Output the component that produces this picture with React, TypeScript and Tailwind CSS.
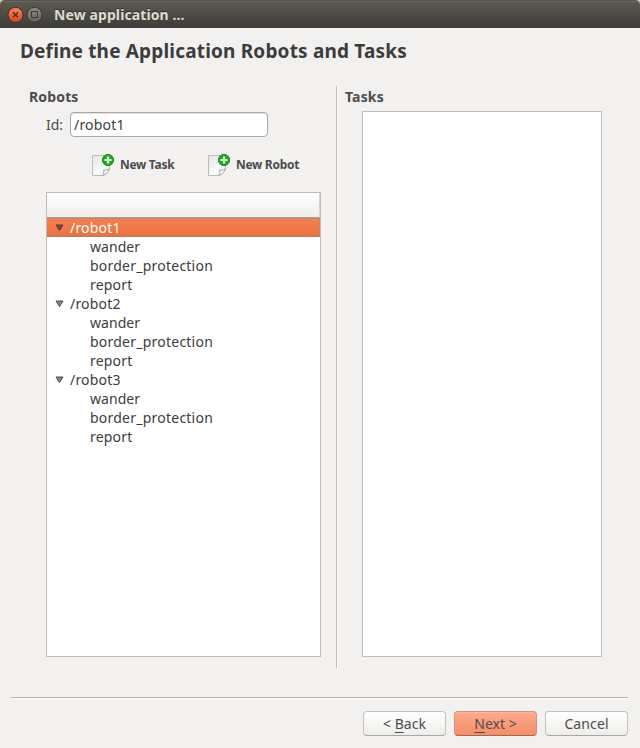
import React from "react";

type Robot = { name: string; tasks: string[] };

const tasks = ["wander", "border_protection", "report"];
const robots: Robot[] = [
  { name: "/robot1", tasks },
  { name: "/robot2", tasks },
  { name: "/robot3", tasks },
];

const taskSpacing: Record<string, string> = {
  wander: "tracking-[0.05px]",
  border_protection: "tracking-[0.23px]",
  report: "tracking-[0.2px]",
};

function TitleBar() {
  return (
    <div className="bg-[#c9c5be]">
      <header className="flex h-7 items-center rounded-t-[5px] border-t border-[#55534c] bg-linear-to-b from-[#5d5a51] to-[#3d3c37] pl-[7px] shadow-[inset_0_1px_0_#6a675f]">
        <svg width="36" height="18" viewBox="0 0 36 18" className="shrink-0">
          <defs>
            <linearGradient id="close" x1="0" y1="0" x2="0" y2="1">
              <stop offset="0" stopColor="#f5835c" />
              <stop offset="1" stopColor="#df4a17" />
            </linearGradient>
            <linearGradient id="max" x1="0" y1="0" x2="0" y2="1">
              <stop offset="0" stopColor="#8b8981" />
              <stop offset="1" stopColor="#65635c" />
            </linearGradient>
          </defs>
          <circle cx="8.5" cy="8.8" r="7.5" fill="url(#close)" stroke="#38332c" />
          <path d="M6 6.3l5 5M11 6.3l-5 5" stroke="#4b2a1c" strokeWidth="1.3" />
          <circle cx="27.5" cy="8.8" r="7.5" fill="url(#max)" stroke="#383731" />
          <rect x="24.5" y="5.5" width="6" height="6" fill="none" stroke="#3b3a35" />
        </svg>
        <h1 className="ml-[11px] text-[14px] font-bold leading-[18px] tracking-[0.1px] text-[#dfdbd2] [text-shadow:0_-1px_0_#2e2d29]">
          New application ...
        </h1>
      </header>
    </div>
  );
}

function NewPageIcon() {
  return (
    <svg width="24" height="24" viewBox="0 0 24 24" className="shrink-0">
      <defs>
        <linearGradient id="sheet" x1="0" y1="0" x2="1" y2="1">
          <stop offset="0" stopColor="#e4e4e4" />
          <stop offset="0.6" stopColor="#fafafa" />
          <stop offset="1" stopColor="#e9e9e9" />
        </linearGradient>
      </defs>
      <path d="M1.5 2.5h17v13c-1 3-3.5 6-7 7h-10z" fill="url(#sheet)" stroke="#bcbcbc" />
      <path d="M11.5 22.5c1.500-1.500 1.700-3.500 1.200-5.500 2 .5 4.300 0 5.800-1.500-1 3.500-3.500 6-7 7z" fill="#fff" stroke="#a5a5a5" />
      <circle cx="17" cy="7" r="5.600" fill="#12b312" stroke="#078907" strokeWidth="0.900" />
      <path d="M17 3.500v7M13.500 7h7" stroke="#fff" strokeWidth="2.200" />
    </svg>
  );
}

function Expander({ dark }: { dark: boolean }) {
  return (
    <svg width="9" height="8" viewBox="0 0 9 8" className="mr-[6px] ml-2 shrink-0">
      <path d="M1 1h7L4.500 6.500z" fill={dark ? "#6b5046" : "#858585"} stroke={dark ? "#573a30" : "#4b4b4b"} />
    </svg>
  );
}

function RobotRows({ robot, selected }: { robot: Robot; selected: boolean }) {
  return (
    <li>
      <div
        className={
          selected
            ? "flex h-[19px] items-center bg-linear-to-b from-[#f58052] to-[#e9713d] text-white shadow-[inset_0_-1px_0_#a9806b,inset_0_1px_0_#c08468,inset_-1px_0_0_#b98a73]"
            : "flex h-[19px] items-center"
        }
      >
        <Expander dark={selected} />
        <span className="leading-[19px] tracking-[0.2px]">{robot.name}</span>
      </div>
      <ul>
        {robot.tasks.map((task) => (
          <li key={task} className="flex h-[19px] items-center pl-[43px]">
            <span className={taskSpacing[task]}>{task}</span>
          </li>
        ))}
      </ul>
    </li>
  );
}

const buttonBase =
  "flex h-[25px] w-[83px] items-center justify-center rounded-[4px] border pt-px text-[14px] leading-5 text-[#4c4c4c]";
const plain =
  buttonBase + " border-[#c4c1bd] border-b-[#aaa7a3] bg-linear-to-b from-white to-[#eeedeb]";
const primary =
  buttonBase + " border-[#c79580] border-b-[#9c6c59] bg-linear-to-b from-[#feaa8b] to-[#f58e66] shadow-[inset_0_1px_0_#ffb79c]";

function Mnemonic({ children }: { children: string }) {
  return <span className="underline decoration-1 underline-offset-[3px]">{children}</span>;
}

export default function App() {
  return (
    <main className="flex h-[748px] w-[640px] flex-col overflow-hidden bg-[#f2f1f0] font-['Noto_Sans','Open_Sans',sans-serif] text-[14px] text-[#3c3c3c]">
      <TitleBar />
      <h2 className="mt-2 ml-[20px] h-[30px] whitespace-nowrap text-[19px] font-bold leading-[30px] tracking-[0.18px]">
        Define the Application Robots and Tasks
      </h2>

      <div className="mt-5 flex h-[582px]">
        <section className="flex w-[336px] flex-col pl-[29px]">
          <h3 className="h-[26px] text-[14px] font-bold leading-[22px] tracking-[0.15px] text-[#4c4c4c]">Robots</h3>
          <div className="flex h-[25px] items-center pl-[17px] text-[#4c4c4c]">
            <label htmlFor="robot-id" className="w-6 leading-[22px]">Id:</label>
            <input
              id="robot-id"
              defaultValue="/robot1"
              className="h-[25px] w-[198px] rounded-[4px] border border-[#aaa7a2] bg-white px-[3px] text-[14px] tracking-[0.2px] text-[#3c3c3c] shadow-[inset_0_1px_0_#e4e2df]"
            />
          </div>
          <div className="mt-4 flex h-6 items-center pl-[62px] text-[12px] font-bold tracking-[-0.3px] text-[#4c4c4c]">
            <button className="flex w-[116px] items-center gap-[5px] whitespace-nowrap"><NewPageIcon />New Task</button>
            <button className="flex items-center gap-[5px] whitespace-nowrap"><NewPageIcon />New Robot</button>
          </div>
          <div className="mt-[15px] ml-[17px] h-[465px] w-[275px] border border-[#bfbbb6] bg-white">
            <div className="h-[25px] border-r border-b border-r-[#d8d5d1] border-b-[#a3a09b] bg-linear-to-b from-white to-[#efeeed]" />
            <ul className="text-[14px] leading-[19px]">
              {robots.map((robot, i) => (
                <RobotRows key={robot.name} robot={robot} selected={i === 0} />
              ))}
            </ul>
          </div>
        </section>
        <div className="w-0.5 border-r border-l border-r-white border-l-[#bfbbb6]" />
        <section className="flex flex-col pl-[7px]">
          <h3 className="h-[25px] text-[14px] font-bold leading-[22px] tracking-[0.15px] text-[#4c4c4c]">Tasks</h3>
          <div className="ml-[17px] h-[546px] w-[240px] border border-[#bfbbb6] bg-white" />
        </section>
      </div>

      <div className="mr-3 ml-[11px] mt-[29px] h-0.5 border-t border-b border-t-[#b3b0ac] border-b-white" />
      <footer className="mt-3 flex justify-end gap-2 pr-3">
        <button className={plain}><span>&lt; <Mnemonic>B</Mnemonic>ack</span></button>
        <button className={primary}><span><Mnemonic>N</Mnemonic>ext &gt;</span></button>
        <button className={plain + " tracking-[0.1px]"}>Cancel</button>
      </footer>
    </main>
  );
}
